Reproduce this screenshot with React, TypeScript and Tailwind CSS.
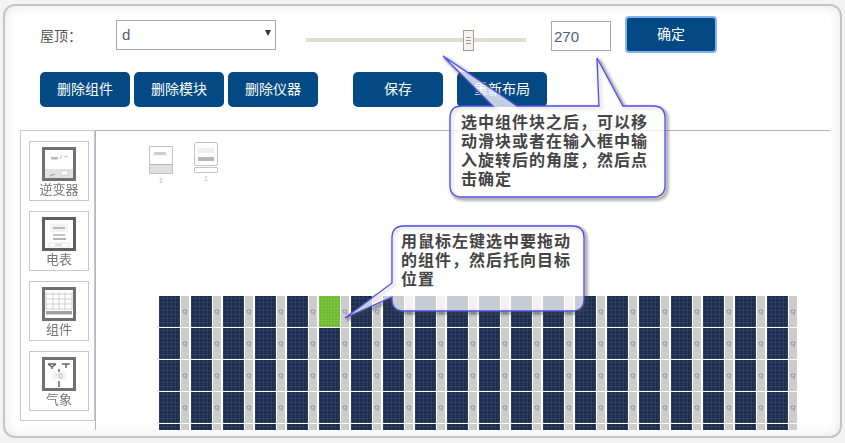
const sans = "font-['Liberation_Sans','Noto_Sans_CJK_SC',sans-serif]";

const deleteButtons = ["删除组件", "删除模块", "删除仪器"];
const cols = Array.from({ length: 20 }, (_, i) => i);
const rows = [0, 1, 2, 3, 4];

const bubbleTop =
  "M462 106 L493 106 L443 56 L517 106 L599 106 L597 58 L623 106 L653 106 Q665 106 665 118 L665 185 Q665 197 653 197 L462 197 Q450 197 450 185 L450 118 Q450 106 462 106 Z";
const bubbleGrid =
  "M404 226 L572 226 Q584 226 584 238 L584 299 Q584 311 572 311 L404 311 Q392 311 392 299 L392 297 L345 318 L392 283 L392 238 Q392 226 404 226 Z";

function InverterIcon() {
  return (
    <svg width="34" height="34" viewBox="0 0 34 34">
      <rect x="1.5" y="1.5" width="31" height="31" fill="#fff" stroke="#707070" strokeWidth="3" />
      <rect x="9" y="10" width="7" height="2.5" fill="#bbb" />
      <path d="M18 12 L20 8 M22 10 Q24 8 26 10" stroke="#bbb" fill="none" />
      <rect x="3" y="22" width="28" height="9" fill="#e2e2e2" />
      <rect x="19" y="24" width="7" height="4" fill="#fff" stroke="#bbb" strokeWidth="0.5" />
      <path d="M8 29 L13 27" stroke="#999" />
    </svg>
  );
}

function MeterIcon() {
  return (
    <svg width="34" height="34" viewBox="0 0 34 34">
      <rect x="1.5" y="1.5" width="31" height="31" fill="#fff" stroke="#606060" strokeWidth="3" />
      <rect x="8" y="7" width="18" height="8" fill="#f2f2f2" />
      <path d="M11 11 H23" stroke="#bbb" strokeWidth="2" />
      <path d="M11 18 H23" stroke="#888" />
      <path d="M11 22 H24" stroke="#999" strokeWidth="1.5" />
      <rect x="7" y="26" width="20" height="4" fill="#fff" stroke="#ccc" strokeWidth="0.5" />
      <path d="M13 28 H20" stroke="#bbb" />
    </svg>
  );
}

function ModuleIcon() {
  return (
    <svg width="34" height="34" viewBox="0 0 34 34">
      <rect x="1.5" y="1.5" width="31" height="31" fill="#fff" stroke="#707070" strokeWidth="3" />
      <path
        d="M4 7 H30 M4 12 H30 M4 17 H30 M4 22 H30 M4 5 V23 M11 5 V23 M17 5 V23 M23 5 V23 M30 5 V23"
        stroke="#c4c4c4"
        strokeWidth="0.8"
        fill="none"
      />
      <rect x="4" y="24" width="26" height="3.5" fill="#a0a0a0" />
    </svg>
  );
}

function WeatherIcon() {
  return (
    <svg width="34" height="34" viewBox="0 0 34 34">
      <rect x="1.5" y="1.5" width="31" height="31" fill="#fff" stroke="#707070" strokeWidth="3" />
      <path d="M6 7 H14 M6 7 L10 10 L14 7 M10 10 V12 M20 7 H28 M24 7 V11" stroke="#666" strokeWidth="1.5" fill="none" />
      <path d="M17 12 V15 M17 24 V30" stroke="#666" strokeWidth="1.5" />
      <rect x="10" y="15" width="14" height="8" fill="#f4f4f4" />
      <path d="M14 18 H15 M17 17 H20 V21 H17 Z" stroke="#aaa" strokeWidth="0.7" fill="none" />
    </svg>
  );
}

const tools = [
  { label: "逆变器", icon: <InverterIcon /> },
  { label: "电表", icon: <MeterIcon /> },
  { label: "组件", icon: <ModuleIcon /> },
  { label: "气象", icon: <WeatherIcon /> },
];

function Cell({ green }: { green: boolean }) {
  return (
    <div className="flex w-[32px] shrink-0 h-[31px]">
      <div
        className={
          green
            ? "w-[21px] h-full bg-[#6cbc2e] bg-[repeating-linear-gradient(0deg,rgba(255,255,255,0.08)_0_1px,transparent_1px_3px),repeating-linear-gradient(90deg,rgba(255,255,255,0.08)_0_1px,transparent_1px_3px)]"
            : "w-[21px] h-full bg-[#1d2d4d] bg-[repeating-linear-gradient(0deg,rgba(110,135,170,0.16)_0_1px,transparent_1px_4px),repeating-linear-gradient(90deg,rgba(110,135,170,0.16)_0_1px,transparent_1px_4px)]"
        }
      />
      <div className="w-[8px] ml-[1px] h-full bg-[#cbcccb] flex items-center justify-center">
        <svg width="8" height="6" viewBox="0 0 8 6">
          <path d="M0.5 1 V2 M7.5 1 V2" stroke="#a9a9b5" strokeWidth="0.8" />
          <path d="M2.5 1 H5.5 V4 H2.5 Z" stroke="#8d8daa" strokeWidth="0.8" fill="none" />
          <path d="M5 4 V6" stroke="#a583a8" strokeWidth="0.8" />
        </svg>
      </div>
    </div>
  );
}

export default function App() {
  return (
    <div className={`relative w-[845px] h-[443px] overflow-hidden bg-[#f3f3f3] pt-[4px] px-[3px] ${sans}`}>
      <div className="h-[434px] w-[839px] rounded-[12px] border-2 border-[#c4c4c4] bg-white overflow-hidden shadow-[inset_0_0_12px_rgba(0,0,0,0.1)]">
        <div className="flex items-start pl-[35px] pt-[10px]">
          <div className="w-[76px] mt-[10px] text-[14px] leading-[20px] text-[#555]">屋顶：</div>
          <div className="relative mt-[4px] w-[160px] h-[30px]">
            <select className="w-full h-full appearance-none border border-[#aaa] bg-white pl-[5px] pt-[1px] text-[15px] text-[#556070] rounded-none">
              <option>d</option>
            </select>
            <div className="absolute right-[5px] top-[10px] w-0 h-0 border-x-[3px] border-x-transparent border-t-[6px] border-t-[#333]" />
          </div>
          <div className="relative ml-[30px] mt-[22px] w-[220px] h-[4px] bg-[#e0dcd5]">
            <div className="absolute left-[157px] top-[-8px] w-[11px] h-[21px] bg-[#f6f3ef] border border-[#a59d95] flex flex-col items-center justify-center gap-[2px]">
              <div className="w-[5px] h-px bg-[#999]" />
              <div className="w-[5px] h-px bg-[#999]" />
              <div className="w-[5px] h-px bg-[#999]" />
            </div>
          </div>
          <input
            defaultValue="270"
            className="ml-[25px] mt-[5px] w-[60px] h-[30px] border border-[#aaa] pl-[2px] text-[15px] text-[#4f5f78] bg-white"
          />
          <button className="ml-[14px] w-[92px] h-[37px] rounded-[4px] border-2 border-[#85b2ee] bg-[#034a85] text-white text-[14px]">
            确定
          </button>
        </div>

        <div className="flex pl-[35px] mt-[19px] gap-[4px]">
          {deleteButtons.map((b) => (
            <button key={b} className="w-[90px] h-[35px] rounded-[5px] bg-[#034a85] text-white text-[14px]">
              {b}
            </button>
          ))}
          <button className="ml-[31px] w-[90px] h-[35px] rounded-[5px] bg-[#034a85] text-white text-[14px]">保存</button>
          <button className="ml-[10px] w-[90px] h-[35px] rounded-[5px] bg-[#034a85] text-white text-[14px]">重新布局</button>
        </div>

        <div className="flex items-start ml-[15px] mr-[10px] mt-[23px]">
          <div className="w-[75px] h-[291px] shrink-0 border border-[#c8c8c8] pl-[8px] pt-[10px] flex flex-col gap-[10px]">
            {tools.map((t) => (
              <div key={t.label} className="w-[60px] h-[60px] border border-[#c8c8c8]">
                <div className="flex flex-col items-center pt-[5px] text-[13px] leading-[16px] text-[#777] blur-[0.5px]">
                  {t.icon}
                  <span className="mt-[1px]">{t.label}</span>
                </div>
              </div>
            ))}
          </div>
          <div className="relative flex-1 h-[300px] border-t border-l border-[#cba9cf] overflow-hidden">
            <div className="absolute left-[53px] top-[15px] flex flex-col items-center opacity-70 blur-[0.4px]">
              <div className="w-[24px] h-[28px] border border-[#aaa] bg-white flex flex-col justify-between">
                <div className="w-[12px] h-[3px] mt-[5px] ml-[4px] bg-[#bbb]" />
                <div className="h-[9px] bg-[#d4d4d4] border-t border-[#999]" />
              </div>
              <span className="text-[7px] leading-[8px] mt-[3px] text-[#8a8aa0]">1</span>
            </div>
            <div className="absolute left-[98px] top-[11px] flex flex-col items-center opacity-70 blur-[0.4px]">
              <div className="w-[24px] h-[24px] rounded-[2px] border border-[#aaa] bg-white flex flex-col items-center gap-[4px] pt-[5px]">
                <div className="w-[16px] h-[5px] bg-[#e8e8e8]" />
                <div className="w-[16px] h-[4px] bg-[#999]" />
              </div>
              <div className="w-[24px] h-[6px] border border-[#aaa] rounded-[1px] mt-[1px]" />
              <span className="text-[7px] leading-[8px] mt-[2px] text-[#b080a0]">1</span>
            </div>
            <div className="ml-[63px] mt-[165px] flex flex-col gap-[1px]">
              {rows.map((r) => (
                <div key={r} className="flex">
                  {cols.map((c) => (
                    <Cell key={c} green={r === 0 && c === 5} />
                  ))}
                </div>
              ))}
            </div>
          </div>
        </div>
      </div>

      <svg className="absolute left-0 top-0 pointer-events-none" width="845" height="443" viewBox="0 0 845 443">
        <path d={bubbleTop} transform="translate(2 2)" fill="none" stroke="#444" strokeOpacity="0.55" strokeWidth="3" className="blur-[1.5px]" />
        <path d={bubbleGrid} transform="translate(2 2)" fill="none" stroke="#444" strokeOpacity="0.55" strokeWidth="3" className="blur-[1.5px]" />
        <path d={bubbleTop} fill="#fff" fillOpacity="0.75" stroke="#4f4fee" strokeWidth="1.3" />
        <path d={bubbleGrid} fill="#fff" fillOpacity="0.75" stroke="#4f4fee" strokeWidth="1.3" />
      </svg>

      <div className="absolute left-[461px] top-[113px] text-[16px] leading-[19px] tracking-[1px] font-bold text-[#444] whitespace-nowrap">
        <div>选中组件块之后，可以移</div>
        <div>动滑块或者在输入框中输</div>
        <div>入旋转后的角度，然后点</div>
        <div>击确定</div>
      </div>
      <div className="absolute left-[401px] top-[232px] text-[16px] leading-[19px] tracking-[1px] font-bold text-[#444] whitespace-nowrap">
        <div>用鼠标左键选中要拖动</div>
        <div>的组件，然后托向目标</div>
        <div>位置</div>
      </div>
    </div>
  );
}
